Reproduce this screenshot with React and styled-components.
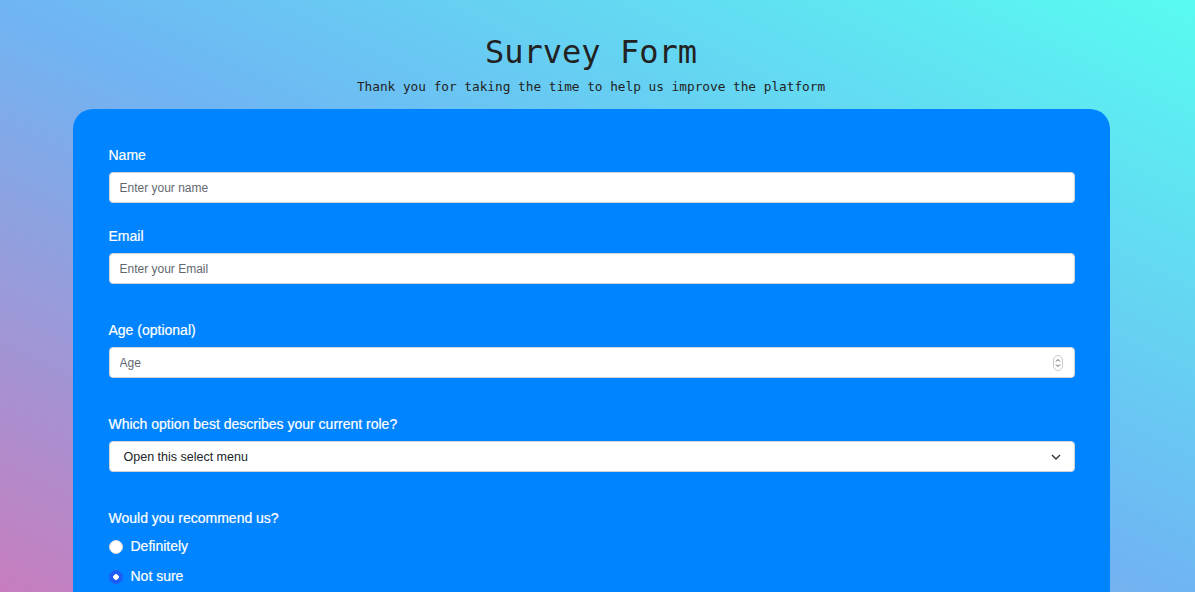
import styled, { createGlobalStyle } from "styled-components";

const GlobalStyle = createGlobalStyle`
  html, body {
    margin: 0;
    padding: 0;
  }
  body {
    min-height: 100vh;
    background: linear-gradient(to top right, #c77dbe 0%, #6fb5f3 50%, #58fbf1 100%);
    background-attachment: fixed;
    font-family: "Liberation Sans", Arial, sans-serif;
  }
`;

const Page = styled.div`
  display: flex;
  flex-direction: column;
  align-items: center;
  padding: 33px 13px 40px 0;
`;

const Title = styled.h1`
  margin: 0;
  font-family: "DejaVu Sans Mono", "Liberation Mono", monospace;
  font-weight: normal;
  font-size: 32px;
  line-height: 38px;
  color: #222;
`;

const Subtitle = styled.p`
  margin: 8px 0 14px;
  font-family: "DejaVu Sans Mono", "Liberation Mono", monospace;
  font-size: 12.75px;
  line-height: 16px;
  color: #222;
`;

const Card = styled.form`
  box-sizing: border-box;
  width: 1037px;
  background: #0184ff;
  border-radius: 20px;
  padding: 38px 35px 40px 36px;
  display: flex;
  flex-direction: column;
`;

const Group = styled.div`
  display: flex;
  flex-direction: column;
  margin-bottom: ${(p) => p.$gap || 38}px;
`;

const Label = styled.label`
  color: #fff;
  font-size: 14px;
  line-height: 17px;
  margin-bottom: 8px;
  -webkit-text-stroke: 0.2px #fff;
`;

const Input = styled.input`
  box-sizing: border-box;
  height: 31px;
  border: 1px solid #ced4da;
  border-radius: 4px;
  padding: 0 10px;
  font-family: "Liberation Sans", Arial, sans-serif;
  font-size: 12px;
  color: #212529;
  background: #fff;
  outline: none;
  &::placeholder {
    color: #62686e;
  }
`;

const Field = styled.div`
  box-sizing: border-box;
  height: 31px;
  display: flex;
  align-items: center;
  border: 1px solid #ced4da;
  border-radius: 4px;
  background: #fff;
  padding: 0 ${(p) => p.$right || 12}px 0 ${(p) => p.$left || 10}px;
`;

const BareInput = styled.input`
  flex: 1;
  border: none;
  outline: none;
  padding: 0;
  font-family: "Liberation Sans", Arial, sans-serif;
  font-size: 12px;
  background: transparent;
  &::placeholder {
    color: #62686e;
  }
  &::-webkit-inner-spin-button,
  &::-webkit-outer-spin-button {
    -webkit-appearance: none;
    margin: 0;
  }
`;

const SelectText = styled.span`
  flex: 1;
  font-size: 12.5px;
  color: #212529;
`;

const RadioRow = styled.label`
  display: flex;
  align-items: center;
  gap: 8px;
  color: #fff;
  font-size: 14px;
  line-height: 17px;
  -webkit-text-stroke: 0.2px #fff;
  margin-top: ${(p) => p.$top || 13}px;
`;

const Radio = styled.input.attrs({ type: "radio" })`
  appearance: none;
  margin: 0;
  width: 14px;
  height: 14px;
  border-radius: 50%;
  border: 1px solid #dcdcdc;
  background: #fff;
  box-sizing: border-box;
  &:checked {
    border-color: #1d5cf5;
    background: radial-gradient(circle, #fff 0 2.5px, #1d5cf5 3px);
  }
`;

const Spinner = () => (
  <svg width="10" height="16" viewBox="0 0 10 16">
    <rect x="0.5" y="0.5" width="9" height="15" rx="4.5" fill="#fff" stroke="#c8c8c8" />
    <path d="M3 6.5 L5 4.5 L7 6.5" fill="none" stroke="#555" strokeWidth="1" />
    <path d="M3 9.5 L5 11.5 L7 9.5" fill="none" stroke="#555" strokeWidth="1" />
  </svg>
);

const Chevron = () => (
  <svg width="10" height="6" viewBox="0 0 10 6">
    <path d="M1 1 L5 5 L9 1" fill="none" stroke="#333" strokeWidth="1.4" />
  </svg>
);

const App = () => {
  return (
    <Page>
      <GlobalStyle />
      <Title>Survey Form</Title>
      <Subtitle>Thank you for taking the time to help us improve the platform</Subtitle>
      <Card>
        <Group $gap={25}>
          <Label>Name</Label>
          <Input placeholder="Enter your name" />
        </Group>
        <Group>
          <Label>Email</Label>
          <Input placeholder="Enter your Email" />
        </Group>
        <Group>
          <Label>Age (optional)</Label>
          <Field $right={11}>
            <BareInput type="number" placeholder="Age" />
            <Spinner />
          </Field>
        </Group>
        <Group>
          <Label>Which option best describes your current role?</Label>
          <Field $left={14} $right={13}>
            <SelectText>Open this select menu</SelectText>
            <Chevron />
          </Field>
        </Group>
        <Group>
          <Label>Would you recommend us?</Label>
          <RadioRow $top={3}>
            <Radio name="rec" />
            Definitely
          </RadioRow>
          <RadioRow>
            <Radio name="rec" defaultChecked />
            Not sure
          </RadioRow>
          <RadioRow>
            <Radio name="rec" />
            Not really
          </RadioRow>
        </Group>
      </Card>
    </Page>
  );
};
export default App;
